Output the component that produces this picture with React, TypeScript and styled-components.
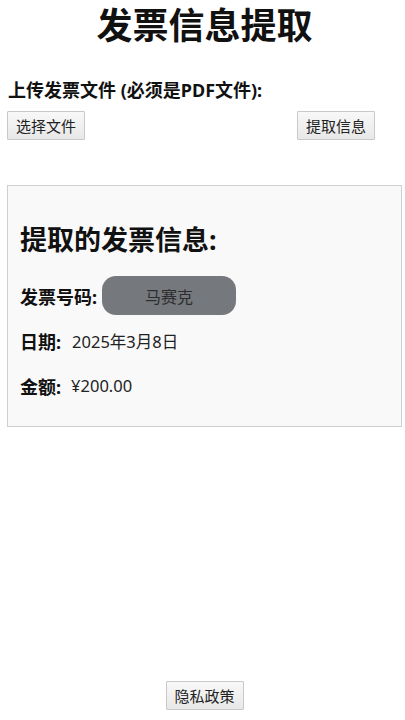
import React from 'react'
import styled, { createGlobalStyle } from 'styled-components'

const GlobalStyle = createGlobalStyle`
	html, body {
		margin: 0;
		padding: 0;
		background: #fff;
		font-family: "Noto Sans", "Noto Sans CJK SC", sans-serif;
		color: #111;
	}
`

const fields = [
	{ label: '发票号码:', value: '马赛克', masked: true, gap: 5 },
	{ label: '日期:', value: '2025年3月8日', masked: false, gap: 11 },
	{ label: '金额:', value: '¥200.00', masked: false, gap: 10 },
]

const App = () => {
	return (
		<Page>
			<GlobalStyle />
			<Title>发票信息提取</Title>

			<UploadLabel>上传发票文件 (必须是PDF文件):</UploadLabel>
			<ButtonRow>
				<Button type='button'>选择文件</Button>
				<Button type='button'>提取信息</Button>
			</ButtonRow>

			<ResultCard>
				<CardTitle>提取的发票信息:</CardTitle>
				{fields.map((f) => (
					<FieldRow key={f.label} gap={f.gap}>
						<FieldLabel>{f.label}</FieldLabel>
						{f.masked ? <Masked>{f.value}</Masked> : <FieldValue>{f.value}</FieldValue>}
					</FieldRow>
				))}
			</ResultCard>

			<Footer>
				<Button type='button'>隐私政策</Button>
			</Footer>
		</Page>
	)
}

const Page = styled.div`
	min-height: 100vh;
	box-sizing: border-box;
	padding: 0 8px 10px 8px;
	display: flex;
	flex-direction: column;
`

const Title = styled.h1`
	margin: 4px 0 0;
	padding-left: 4px;
	font-size: 36px;
	line-height: 44px;
	font-weight: 700;
	text-align: center;
`

const UploadLabel = styled.div`
	margin-top: 30px;
	font-size: 18px;
	line-height: 24px;
	font-weight: 700;
`

const ButtonRow = styled.div`
	margin-top: 9px;
	display: flex;
	justify-content: space-between;
	padding-right: 22px;
`

const Button = styled.button`
	height: 29px;
	width: 78px;
	margin-left: -1px;
	padding: 0;
	font-family: "Noto Sans CJK SC", "Noto Sans", sans-serif;
	font-size: 15px;
	color: #222;
	background: linear-gradient(#f8f8f8, #e8e8e8);
	border: 1px solid #c9c9c9;
	border-radius: 1px;
`

const ResultCard = styled.div`
	margin-top: 45px;
	margin-left: -1px;
	margin-right: -5px;
	padding: 12px 12px 21px;
	background: #f9f9f9;
	border: 1px solid #cfcfcf;
`

const CardTitle = styled.h2`
	margin: 25px 0 19px;
	font-size: 27px;
	line-height: 34px;
	font-weight: 700;
`

const FieldRow = styled.div<{ gap: number }>`
	display: flex;
	align-items: center;
	gap: ${(p) => p.gap}px;
	height: 39px;
	& + & {
		margin-top: 6px;
	}
`

const FieldLabel = styled.span`
	font-size: 18px;
	font-weight: 700;
`

const FieldValue = styled.span`
	font-size: 16.5px;
	color: #222;
`

const Masked = styled.span`
	width: 134px;
	height: 39px;
	display: flex;
	align-items: center;
	justify-content: center;
	border-radius: 14px;
	background: #75787c;
	color: #2e2e2e;
	font-size: 16px;
`

const Footer = styled.div`
	margin-top: auto;
	display: flex;
	justify-content: center;
	padding-left: 5px;
`

export default App
